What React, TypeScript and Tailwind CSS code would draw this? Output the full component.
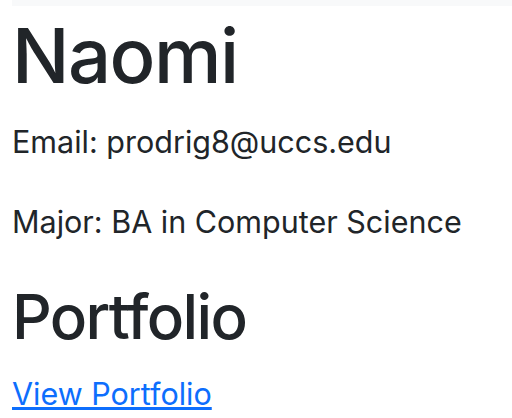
export default function App() {
  return (
    <div className="bg-white pl-3 text-[#212529]" style={{ fontFamily: 'Inter, "Liberation Sans", sans-serif' }}>
      <div className="h-[6px] bg-[#f8f9fa]" />
      <h1 className="mt-[4px] mb-[18px] text-[76px] font-medium leading-[1.2] tracking-[-0.02em]">Naomi</h1>
      <p className="mb-[34px] text-[30.5px] leading-[46px]">Email: prodrig8@uccs.edu</p>
      <p className="mb-[35px] text-[30.5px] leading-[46px]">Major: BA in Computer Science</p>
      <h2 className="mb-[16px] text-[62px] font-medium leading-[1.2] tracking-[-0.027em]">Portfolio</h2>
      <p className="text-[30.5px] leading-[46px]">
        <a href="#" className="text-[#0d6efd] underline">
          View Portfolio
        </a>
      </p>
    </div>
  );
}
